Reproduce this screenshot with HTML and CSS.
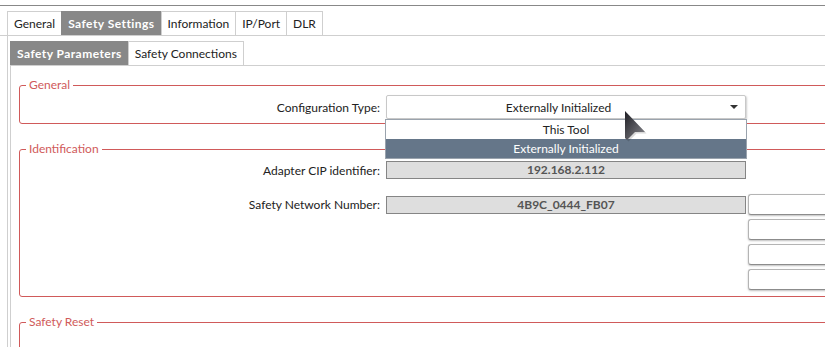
FILE: index.html
```html
<!DOCTYPE html>
<html lang="en">
<head>
    <meta charset="UTF-8">
    <title>Safety Settings</title>
    <link rel="stylesheet" href="styles.css">
</head>
<body>
    <div class="frame">
        <div class="tabs">
            <div class="tab">General</div>
            <div class="tab active">Safety Settings</div>
            <div class="tab">Information</div>
            <div class="tab">IP/Port</div>
            <div class="tab">DLR</div>
        </div>
        <div class="panel outer-panel">
            <div class="tabs">
                <div class="tab active">Safety Parameters</div>
                <div class="tab">Safety Connections</div>
            </div>
            <div class="panel inner-panel">
                <fieldset class="group">
                    <legend>General</legend>
                    <div class="form-grid">
                        <label class="field-label">Configuration Type:</label>
                        <div class="select">
                            <span class="select-text">Externally Initialized</span>
                            <span class="caret"></span>
                            <ul class="options">
                                <li>This Tool</li>
                                <li class="selected">Externally Initialized</li>
                            </ul>
                            <svg class="cursor" width="26" height="34" viewBox="0 0 26 34">
                                <defs>
                                    <linearGradient id="cur" x1="0" y1="0" x2="1" y2="1">
                                        <stop offset="0" stop-color="#1e1e24"/>
                                        <stop offset="1" stop-color="#8a8a90"/>
                                    </linearGradient>
                                </defs>
                                <polygon points="1,0 21,21 11,21 3,29 1,27" fill="#000" opacity="0.15" transform="translate(1.5,1.5)"/>
                                <polygon points="1,0 21,21 11,21 3,29 1,27" fill="url(#cur)"/>
                            </svg>
                        </div>
                    </div>
                </fieldset>

                <fieldset class="group ident">
                    <legend>Identification</legend>
                    <div class="form-grid">
                        <label class="field-label">Adapter CIP identifier:</label>
                        <div class="readonly">192.168.2.112</div>

                        <label class="field-label snn">Safety Network Number:</label>
                        <div class="readonly snn">4B9C_0444_FB07</div>
                        <div class="button-stack">
                            <button class="side-btn"></button>
                            <button class="side-btn"></button>
                            <button class="side-btn"></button>
                            <button class="side-btn"></button>
                        </div>
                    </div>
                </fieldset>

                <fieldset class="group reset">
                    <legend>Safety Reset</legend>
                </fieldset>
            </div>
        </div>
    </div>
</body>
</html>
```

FILE: styles.css
```css
body {
    margin: 0;
    background: #fff;
    color: #222;
    font-family: Lato, 'Liberation Sans', sans-serif;
    font-size: 12px;
    overflow: hidden;
}

.frame {
    width: 1100px;
    margin-top: 5px;
    padding-top: 5px;
    border-top: 1px solid #888;
}

.tabs {
    display: flex;
    padding-left: 7px;
    border-bottom: 1px solid #cfcfcf;
}

.panel > .tabs {
    padding-left: 0;
}

.tab {
    height: 23px;
    line-height: 23px;
    padding: 0 6px;
    border: 1px solid #cfcfcf;
    border-bottom: none;
    margin-right: -1px;
    color: #222;
    white-space: nowrap;
}

.tab.active {
    background: #888;
    border-color: #888;
    color: #fff;
    font-weight: bold;
    letter-spacing: 0.45px;
}

.outer-panel {
    margin-left: 7px;
    border-left: 1px solid #cfcfcf;
    padding: 5px 0 0 2px;
}

.inner-panel {
    border-left: 1px solid #cfcfcf;
    padding: 11px 0 0 8px;
}

.group {
    margin: 0 0 17px 0;
    padding: 0;
    border: 1px solid #d05a5a;
    border-radius: 3px;
}

.group legend {
    margin-left: 6px;
    padding: 0 3px;
    line-height: 16px;
    color: #d05a5a;
}

.group:first-child .form-grid {
    padding: 2px 0 4px;
}

.form-grid {
    display: grid;
    grid-template-columns: 360px 366px 120px;
    align-items: center;
}

.field-label {
    grid-column: 1;
    text-align: right;
    white-space: nowrap;
}

.select {
    position: relative;
    display: flex;
    align-items: center;
    height: 22px;
    margin-left: 6px;
    border: 1px solid #c8c8c8;
    border-radius: 2px;
    box-shadow: 1px 1px 2px rgba(0, 0, 0, 0.2);
    background: #fff;
}

.select-text {
    flex: 1;
    text-align: center;
}

.caret {
    margin-right: 7px;
    border-left: 4px solid transparent;
    border-right: 4px solid transparent;
    border-top: 4px solid #333;
}

.options {
    position: absolute;
    top: 23px;
    left: -2px;
    width: 360px;
    margin: 0;
    padding: 0;
    list-style: none;
    border: 1px solid #9aa3ad;
    background: #fff;
    z-index: 2;
}

.options li {
    height: 19px;
    line-height: 19px;
    text-align: center;
}

.options li.selected {
    background: #657689;
    color: #fff;
}

.cursor {
    position: absolute;
    left: 237px;
    top: 15px;
    z-index: 3;
}

.ident .form-grid {
    padding: 4px 0 6px;
    row-gap: 15px;
}

.readonly {
    grid-column: 2;
    height: 16px;
    line-height: 16px;
    margin-left: 6px;
    border: 1px solid #858585;
    background: #dedede;
    color: #555;
    font-weight: bold;
    text-align: center;
}

.field-label.snn,
.readonly.snn {
    align-self: start;
    margin-top: 2px;
}

.field-label.snn {
    line-height: 18px;
}

.button-stack {
    grid-column: 3;
    display: flex;
    flex-direction: column;
    gap: 4px;
    margin-left: 2px;
}

.side-btn {
    height: 21px;
    padding: 0;
    border: 1px solid #b4b4b4;
    border-right: none;
    border-bottom-color: #8c8c8c;
    border-radius: 3px 0 0 3px;
    background: #fff;
    box-shadow: 0 1px 2px rgba(0, 0, 0, 0.25);
}

.reset {
    height: 60px;
    margin-top: 16px;
}
```
